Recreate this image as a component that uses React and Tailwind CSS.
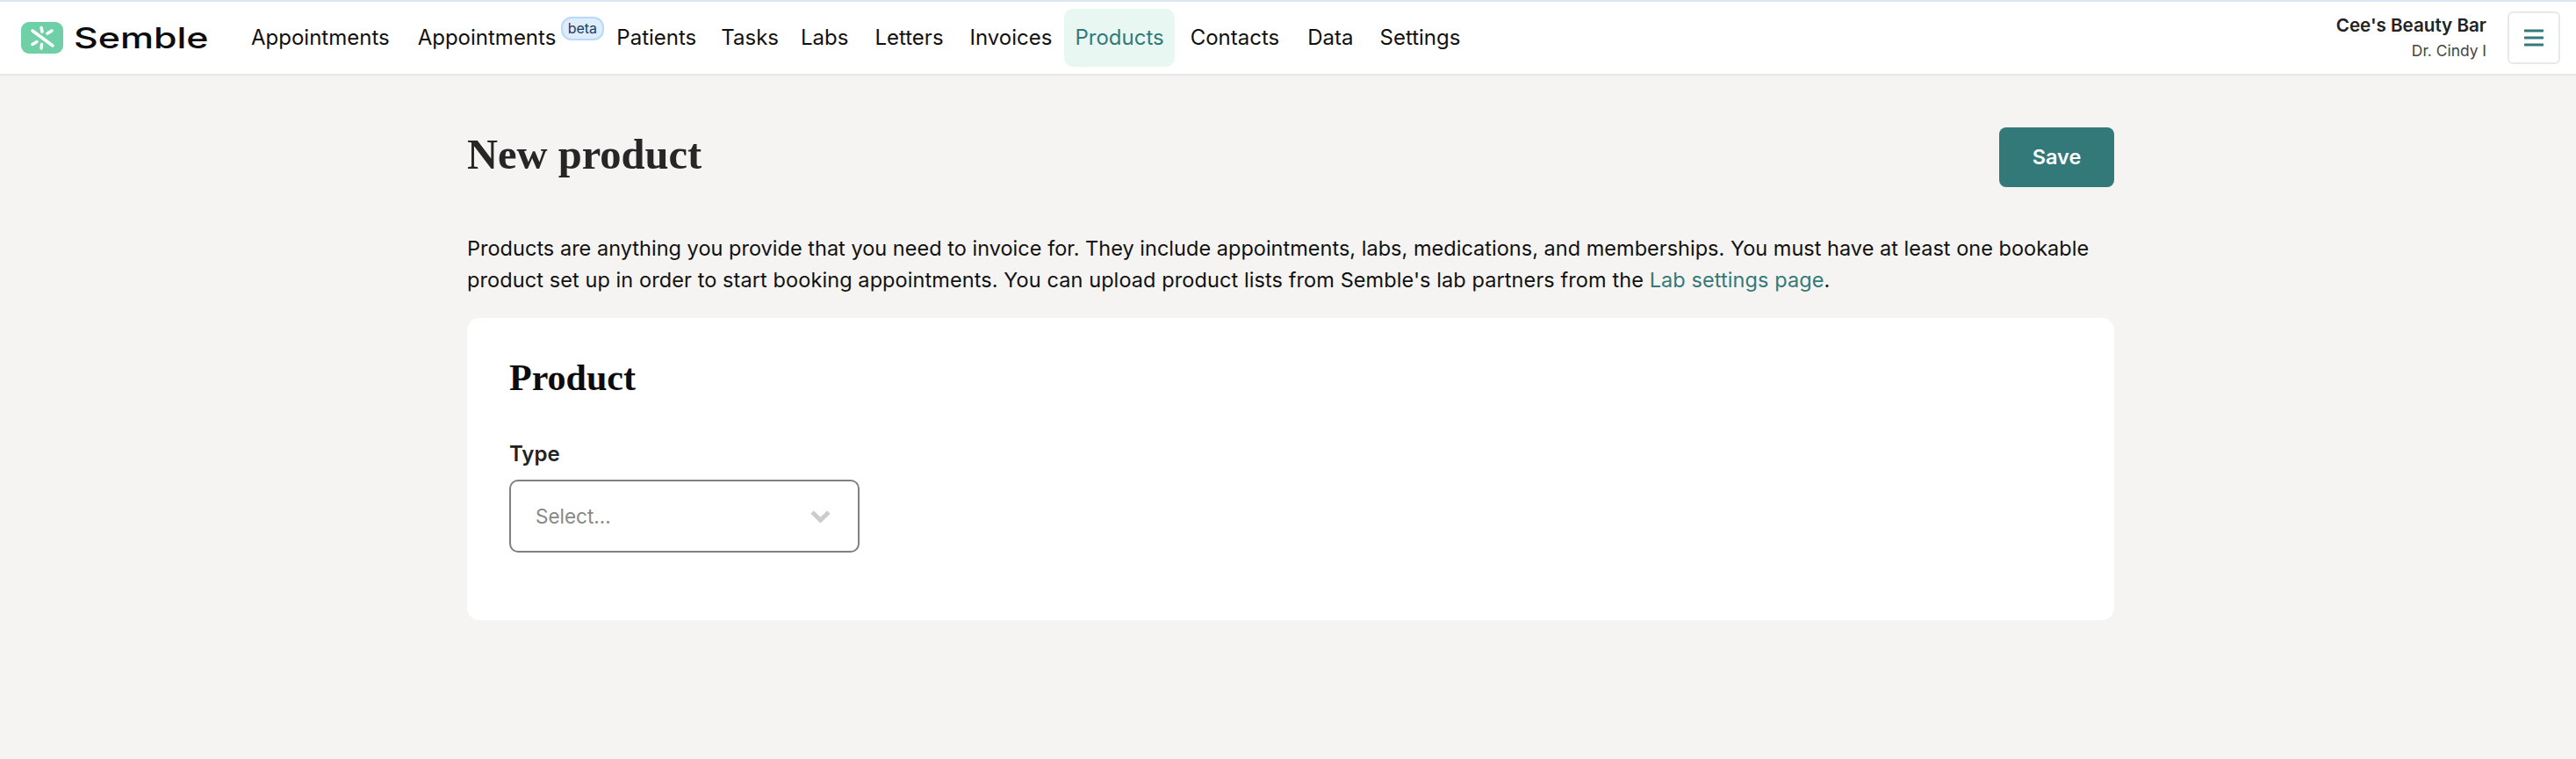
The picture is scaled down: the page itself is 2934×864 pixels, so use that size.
const navItems = [
    { label: 'Appointments', gap: 'mr-[8px]' },
    { label: 'Appointments', gap: 'mr-[45px]', beta: true },
    { label: 'Patients', gap: 'mr-[4px]' },
    { label: 'Tasks', gap: 'mr-[1px]' },
    { label: 'Labs', gap: 'mr-[6px]' },
    { label: 'Letters', gap: 'mr-[6px]' },
    { label: 'Invoices', gap: 'mr-[2px]' },
    { label: 'Products', gap: 'mr-[6px]', active: true },
    { label: 'Contacts', gap: 'mr-[8px]' },
    { label: 'Data', gap: 'mr-[6px]' },
    { label: 'Settings', gap: 'mr-[6px]' },
]

const Logo = () => {
    return (
        <div className="flex items-center gap-[12px]">
            <svg width="48" height="36" viewBox="0 0 48 36">
                <rect width="48" height="36" rx="9" fill="#6fd0a8" />
                <path d="M13 10 L36 27" stroke="#fff" strokeWidth="3.5" strokeLinecap="round" />
                <path d="M23 6.5 L24 11" stroke="#fff" strokeWidth="3.5" strokeLinecap="round" />
                <path d="M35 10 L30 13" stroke="#fff" strokeWidth="3.5" strokeLinecap="round" />
                <path d="M18 22.5 L13 25.5" stroke="#fff" strokeWidth="3.5" strokeLinecap="round" />
                <path d="M23.5 25.5 L23 30" stroke="#fff" strokeWidth="3.5" strokeLinecap="round" />
            </svg>
            <span className="font-['Inter',sans-serif] text-[33px] leading-none font-medium text-[#0c0c0c] w-[154px] scale-x-[1.3] origin-left">Semble</span>
        </div>
    )
}

const NavBar = () => {
    return (
        <div className="h-[86px] bg-white border-t-2 border-b-2 border-t-[#dbe6f5] border-b-[#e8e8e6] flex items-center justify-between pl-[24px] pr-[18px]">
            <div className="flex items-center">
                <Logo />
                <nav className="flex items-center ml-[36px] text-[24px] text-[#111]">
                    {navItems.map((item, i) => (
                        <div
                            key={i}
                            className={`relative h-[66px] flex items-center px-[12px] rounded-[10px] ${item.active ? 'bg-[#e8f7f2] text-[#33797a]' : ''} ${item.gap}`}
                        >
                            {item.label}
                            {item.beta && (
                                <span className="absolute left-[175px] top-[9px] h-[27px] px-[6px] rounded-[12px] bg-[#deedfb] border-2 border-[#b8d9f7] text-[16px] leading-[22px] text-[#1f3a5c]">
                                    beta
                                </span>
                            )}
                        </div>
                    ))}
                </nav>
            </div>
            <div className="flex items-center gap-[24px]">
                <div className="flex flex-col items-end">
                    <span className="text-[20.6px] leading-[30px] font-semibold text-[#222]">Cee's Beauty Bar</span>
                    <span className="text-[17.4px] leading-[28px] text-[#444]">Dr. Cindy I</span>
                </div>
                <button className="w-[60px] h-[60px] flex items-center justify-center bg-white border-2 border-[#e8e8e6] rounded-[6px]">
                    <svg width="22" height="20" viewBox="0 0 22 20">
                        <path d="M1 2 H21 M1 10 H21 M1 18 H21" stroke="#33797a" strokeWidth="3" strokeLinecap="round" />
                    </svg>
                </button>
            </div>
        </div>
    )
}

export default function App() {
    return (
        <div className="min-h-[864px] bg-[#f5f4f2] font-['Inter',sans-serif] text-[#111]">
            <NavBar />
            <main className="w-[1876px] ml-[532px]">
                <div className="flex items-center justify-between pt-[59px]">
                    <h1 className="font-['Liberation_Serif',serif] text-[48.5px] leading-[62px] pb-[6px] font-bold text-[#262626]">New product</h1>
                    <button className="w-[131px] h-[68px] rounded-[8px] bg-[#33797a] text-white text-[23.5px] font-semibold">Save</button>
                </div>
                <p className="mt-[52px] text-[23.5px] leading-[36px] tracking-[0.02px]">
                    Products are anything you provide that you need to invoice for. They include appointments, labs, medications, and memberships. You must have at least one bookable
                    <br />
                    <span className="tracking-[0.09px]">
                        product set up in order to start booking appointments. You can upload product lists from Semble's lab partners from the{' '}
                        <span className="text-[#33797a]">Lab settings page</span>.
                    </span>
                </p>
                <section className="mt-[25px] h-[344px] bg-white rounded-[14px] p-[48px] pt-[42px]">
                    <h2 className="font-['Liberation_Serif',serif] text-[42px] leading-[52px] font-bold text-[#0c0c0c]">Product</h2>
                    <label className="block mt-[45px] text-[24px] leading-[32px] font-semibold text-[#222]">Type</label>
                    <div className="mt-[13px] w-[399px] h-[83px] flex items-center justify-between pl-[28px] pr-[30px] border-2 border-[#808080] rounded-[10px]">
                        <span className="text-[22.5px] text-[#888]">Select...</span>
                        <svg width="25" height="16" viewBox="0 0 25 16">
                            <path d="M3 3 L12.5 12 L22 3" fill="none" stroke="#ccc" strokeWidth="5" />
                        </svg>
                    </div>
                </section>
            </main>
        </div>
    )
}
